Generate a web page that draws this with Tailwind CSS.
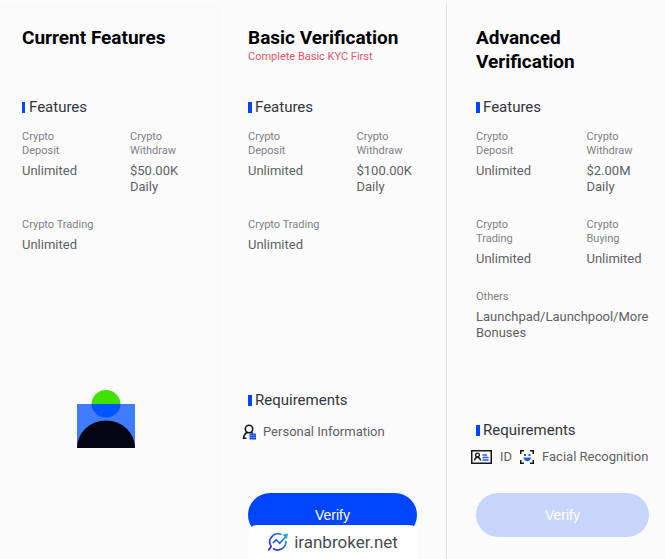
<!DOCTYPE html>
<html lang="en">
<head>
  <meta charset="UTF-8" />
  <meta name="viewport" content="width=device-width, initial-scale=1" />
  <title>Identity Verification</title>
  <script src="https://cdn.jsdelivr.net/npm/@tailwindcss/browser@4"></script>
</head>
<body class="bg-[#fbfbfb] font-['Roboto',sans-serif] text-[13px] leading-4 text-[#5f6165]">
  <main class="relative grid min-h-screen grid-cols-[minmax(0,220fr)_minmax(0,227fr)_minmax(0,218fr)] pt-1">

    <!-- Current features -->
    <section class="flex flex-col bg-[#fafafa] pt-[22px] pr-[30px] pb-[22px] pl-[22px]">
      <div class="h-[70px]">
        <h2 class="text-[19px] leading-6 font-bold text-black">Current Features</h2>
      </div>
      <h3 class="flex items-center gap-1 text-[15px] leading-[22px] text-[#33353a]"><span class="h-[11px] w-[3px] bg-[#0045ff]"></span>Features</h3>
      <dl class="mt-3 grid grid-cols-2 gap-x-12 gap-y-[23px]">
        <div>
          <dt class="mb-[5px] text-[11px] leading-[14px] text-[#7f8185]">Crypto Deposit</dt>
          <dd>Unlimited</dd>
        </div>
        <div>
          <dt class="mb-[5px] text-[11px] leading-[14px] text-[#7f8185]">Crypto Withdraw</dt>
          <dd>$50.00K Daily</dd>
        </div>
        <div class="col-span-2">
          <dt class="mb-[5px] text-[11px] leading-[14px] text-[#7f8185]">Crypto Trading</dt>
          <dd>Unlimited</dd>
        </div>
      </dl>
      <svg class="mx-auto mt-auto mb-[89px] h-[58px] w-[58px]" viewBox="0 0 58 58" aria-hidden="true">
        <circle cx="29" cy="14.5" r="14.5" fill="#40e000" />
        <path d="M0 14h58v44H0z" fill="#407cff" />
        <path d="M14.5 14h29a14.5 13.5 0 0 1-29 0z" fill="#0055ff" />
        <path d="M0 58a29 27.500 0 0 1 58 0z" fill="#000511" />
      </svg>
    </section>

    <!-- Basic -->
    <section class="flex flex-col border-r border-[#e3e3e3] pt-[22px] pr-[29px] pb-[22px] pl-7">
      <div class="h-[70px]">
        <h2 class="text-[19px] leading-6 font-bold text-black">Basic Verification</h2>
        <p class="text-[11px] leading-[14px] text-[#e0566a]">Complete Basic KYC First</p>
      </div>
      <h3 class="flex items-center gap-[3px] text-[15px] leading-[22px] text-[#33353a]"><span class="h-[11px] w-1 bg-[#0045ff]"></span>Features</h3>
      <dl class="mt-3 grid grid-cols-2 gap-x-12 gap-y-[23px]">
        <div>
          <dt class="mb-[5px] text-[11px] leading-[14px] text-[#7f8185]">Crypto Deposit</dt>
          <dd>Unlimited</dd>
        </div>
        <div>
          <dt class="mb-[5px] text-[11px] leading-[14px] text-[#7f8185]">Crypto Withdraw</dt>
          <dd>$100.00K Daily</dd>
        </div>
        <div class="col-span-2">
          <dt class="mb-[5px] text-[11px] leading-[14px] text-[#7f8185]">Crypto Trading</dt>
          <dd>Unlimited</dd>
        </div>
      </dl>
      <h3 class="mt-auto flex items-center gap-[3px] text-[15px] leading-[22px] text-[#33353a]"><span class="h-[11px] w-1 bg-[#0045ff]"></span>Requirements</h3>
      <ul class="mt-[13px] mb-[53px] -ml-1.5">
        <li class="flex items-center gap-1.5">
          <svg class="h-4 w-[15px]" viewBox="0 0 15 16" fill="none" aria-hidden="true">
            <circle cx="7" cy="5" r="3.700" stroke="#15171c" stroke-width="1.600" />
            <path d="M5.500 8.300C3 9.500 1.800 11.500 1.500 14.200h3M8.500 8.200l2.500 1.200" stroke="#15171c" stroke-width="1.600" />
            <path d="M7.500 10.300H14M7.500 12.500H14M7.500 14.700H14" stroke="#1f4ff0" stroke-width="1.800" />
          </svg>
          Personal Information
        </li>
      </ul>
      <button type="button" class="h-11 rounded-full bg-[#0045ff] font-['Liberation_Sans',sans-serif] text-sm text-white">Verify</button>
    </section>

    <!-- Advanced -->
    <section class="flex flex-col pt-[22px] pr-4 pb-[22px] pl-[29px]">
      <div class="h-[70px]">
        <h2 class="text-[19px] leading-6 font-bold text-black">Advanced Verification</h2>
      </div>
      <h3 class="flex items-center gap-[3px] text-[15px] leading-[22px] text-[#33353a]"><span class="h-[11px] w-1 bg-[#0045ff]"></span>Features</h3>
      <dl class="mt-3 grid grid-cols-2 gap-x-12 gap-y-[23px]">
        <div>
          <dt class="mb-[5px] text-[11px] leading-[14px] text-[#7f8185]">Crypto Deposit</dt>
          <dd>Unlimited</dd>
        </div>
        <div>
          <dt class="mb-[5px] text-[11px] leading-[14px] text-[#7f8185]">Crypto Withdraw</dt>
          <dd>$2.00M Daily</dd>
        </div>
        <div>
          <dt class="mb-[5px] text-[11px] leading-[14px] text-[#7f8185]">Crypto Trading</dt>
          <dd>Unlimited</dd>
        </div>
        <div>
          <dt class="mb-[5px] text-[11px] leading-[14px] text-[#7f8185]">Crypto Buying</dt>
          <dd>Unlimited</dd>
        </div>
        <div class="col-span-2">
          <dt class="mb-[5px] text-[11px] leading-[14px] text-[#7f8185]">Others</dt>
          <dd>Launchpad/Launchpool/More Bonuses</dd>
        </div>
      </dl>
      <h3 class="mt-auto flex items-center gap-[3px] text-[15px] leading-[22px] text-[#33353a]"><span class="h-[11px] w-1 bg-[#0045ff]"></span>Requirements</h3>
      <ul class="mt-2 mb-7 -ml-[5px] flex gap-2 whitespace-nowrap">
        <li class="flex items-center gap-2">
          <svg class="h-[14px] w-[21px]" viewBox="0 0 21 14" fill="none" aria-hidden="true">
            <path d="M.75.75h19.500v12.500H.75z" stroke="#15171c" stroke-width="1.500" />
            <circle cx="6.500" cy="5" r="1.900" stroke="#15171c" stroke-width="1.300" />
            <path d="M3.500 10.500c.3-2.200 1.400-3.200 3-3.200s2.700 1 3 3.200" stroke="#15171c" stroke-width="1.400" />
            <path d="M11.500 5h4.500M11.500 7.500h6M11.500 10h6" stroke="#2458f5" stroke-width="1.500" />
          </svg>
          ID
        </li>
        <li class="flex items-center gap-2">
          <svg class="h-[14px] w-[14px]" viewBox="0 0 14 14" fill="none" aria-hidden="true">
            <path d="M.75 4V.75H4M10 .75h3.250V4M13.250 10v3.250H10M4 13.250H.75V10" stroke="#15171c" stroke-width="1.500" />
            <path d="M4 4h2v2H4zM8.500 4h2v2h-2zM3.500 7.500h7.500c-.3 2.500-1.800 3.700-3.700 3.700S3.800 10 3.500 7.500z" fill="#2458f5" />
          </svg>
          Facial Recognition
        </li>
      </ul>
      <button type="button" disabled class="h-11 rounded-full bg-[#c7d5fa] font-['Liberation_Sans',sans-serif] text-sm text-white">Verify</button>
    </section>

    <!-- Site badge -->
    <div class="absolute bottom-0 left-1/2 flex h-[34px] w-[169px] -translate-x-1/2 items-center justify-center gap-1.5 rounded-t-lg bg-white text-[17px] text-[#4a4c50]">
      <svg class="h-5 w-[21px]" viewBox="0 0 21 20" fill="none" aria-hidden="true">
        <defs>
          <linearGradient id="badge" x1="2" y1="18" x2="19" y2="3" gradientUnits="userSpaceOnUse">
            <stop stop-color="#3a1fd0" />
            <stop offset=".5" stop-color="#2a5be0" />
            <stop offset="1" stop-color="#19a5d8" />
          </linearGradient>
        </defs>
        <path d="M14 2.500A8.200 8.200 0 0 0 3.700 14.500L1 18.500M5.500 16.500A8.200 8.200 0 0 0 18.300 9" stroke="url(#badge)" stroke-width="1.700" />
        <path d="M5.500 11l3.300-3.300 3.400 3.600L18 5" stroke="url(#badge)" stroke-width="1.700" />
        <path d="M15 2.500l5.500-1-1 5.500z" fill="#19a5d8" />
      </svg>
      iranbroker.net
    </div>
  </main>
</body>
</html>
